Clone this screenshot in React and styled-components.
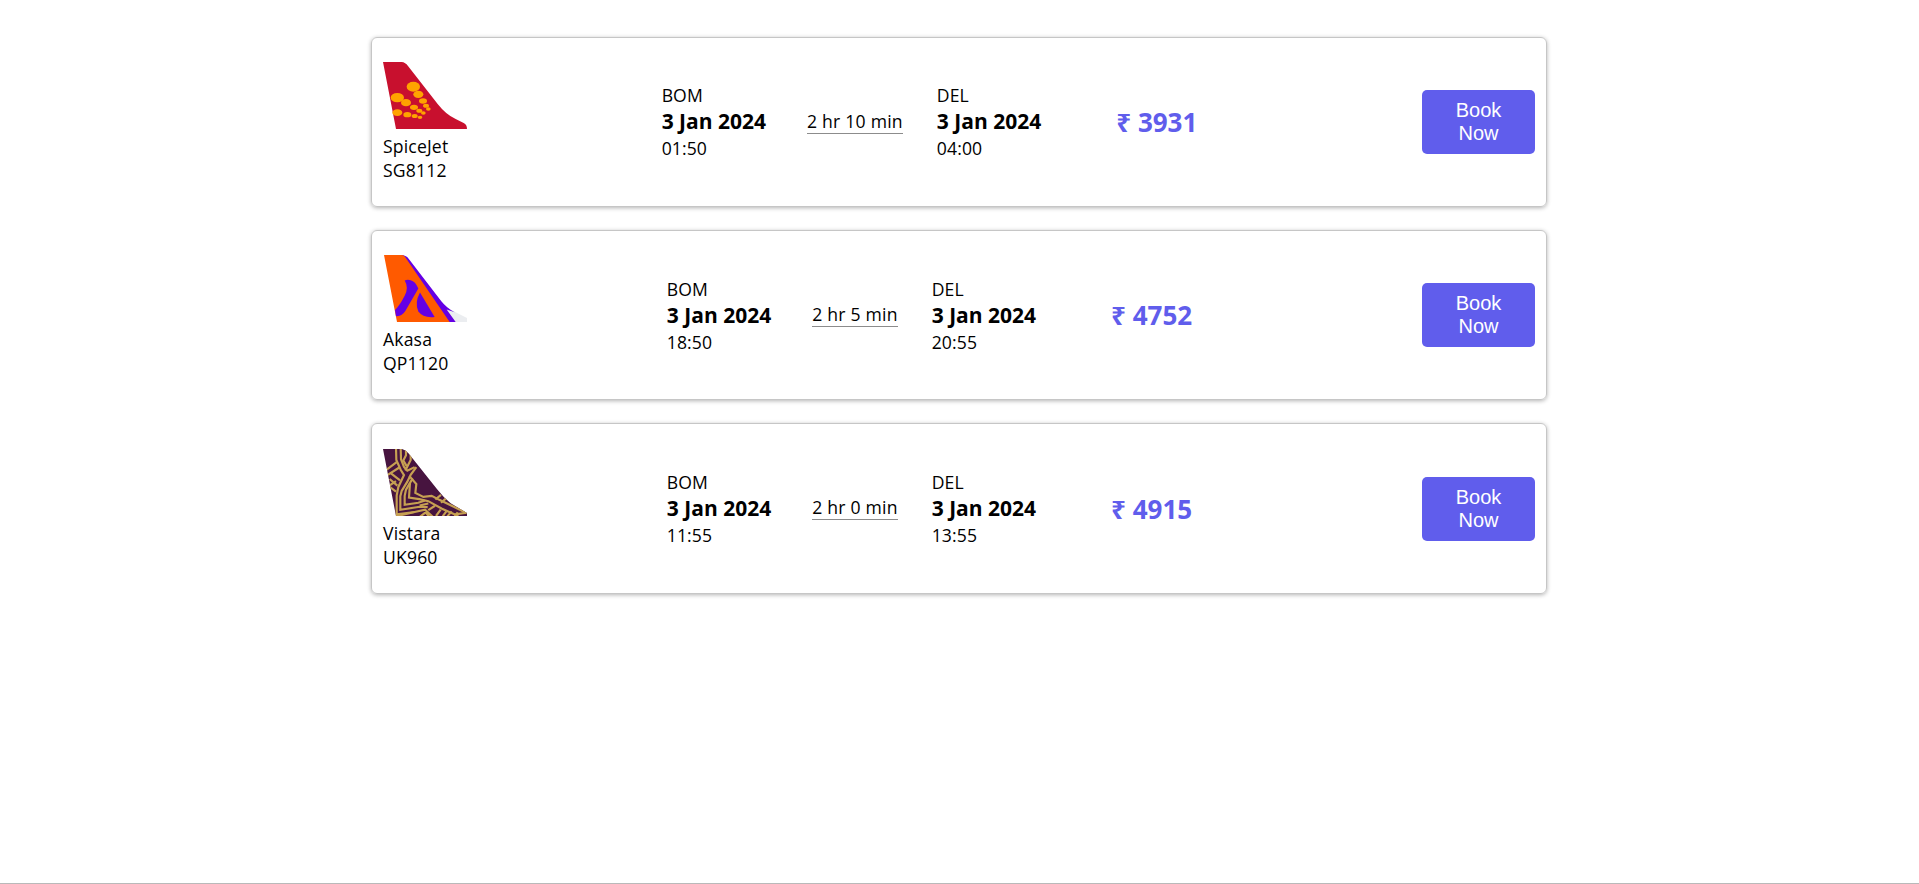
import React from "react";
import styled, { createGlobalStyle } from "styled-components";

const GlobalStyle = createGlobalStyle`
  * { box-sizing: border-box; }
  body {
    margin: 0;
    background: #fff;
    color: #000;
    font-family: "Open Sans", "Noto Sans", sans-serif;
    font-size: 17.6px;
    line-height: 24px;
  }
`;

const Page = styled.main`
  height: 100vh;
  padding: 36.7px 1px 0 0;
  border-bottom: 1px solid #b9b9b9;
  display: flex;
  flex-direction: column;
  align-items: center;
  gap: 22.8px;
`;

const Card = styled.article`
  width: 1176px;
  height: 170.5px;
  padding: 0 11px;
  border: 1px solid #c6c6c6;
  border-radius: 6px;
  box-shadow: 0 1px 4px rgba(0, 0, 0, 0.3);
  display: flex;
  align-items: center;
`;

const Airline = styled.div`
  width: 84px;
  display: flex;
  flex-direction: column;
  letter-spacing: 0.16px;
`;

const Tail = styled.svg`
  display: block;
  width: 84px;
  height: 67px;
  margin-bottom: 5px;
`;

const Journey = styled.div`
  flex: 1;
  margin-right: 30px;
  display: flex;
  justify-content: center;
  align-items: center;
`;

const Stop = styled.div`
  display: flex;
  flex-direction: column;
  letter-spacing: 0.1px;
`;

const StopDate = styled.strong`
  font-size: 21px;
  font-weight: 700;
  line-height: 29px;
  letter-spacing: 0;
`;

const Duration = styled.span`
  margin: 0 34px 1.6px 41px;
  border-bottom: 1px solid #8c8c8c;
  letter-spacing: 0.22px;
`;

const Price = styled.span`
  margin-left: 75px;
  color: #605dec;
  font-size: 26px;
  font-weight: 700;
  line-height: 36px;
`;

const BookButton = styled.button`
  width: 113px;
  height: 64px;
  padding: 0 24px;
  border: 0;
  border-radius: 5px;
  background: #605dec;
  color: #fff;
  font: 20px/23px "Liberation Sans", Arial, sans-serif;
`;

const SpiceJetTail = () => (
  <Tail viewBox="54 96 252 201" preserveAspectRatio="none">
    <path fill="#c8102e" d="M54 96H110Q121 97 129 108L218 222Q243 254 272 267L296 279Q306 284 306 297H93Z" />
    <g fill="#ffa300">
      <ellipse cx="145" cy="170" rx="20" ry="15" />
      <ellipse cx="97" cy="203" rx="20" ry="14" />
      <ellipse cx="160" cy="193" rx="15" ry="11" />
      <ellipse cx="123" cy="218" rx="15" ry="11" />
      <ellipse cx="174" cy="213" rx="12" ry="8" />
      <ellipse cx="147" cy="232" rx="12" ry="8" />
      <ellipse cx="97" cy="248" rx="15" ry="10" />
      <ellipse cx="183" cy="227" rx="9" ry="6" />
      <ellipse cx="163" cy="242" rx="9" ry="6" />
      <ellipse cx="127" cy="254" rx="12" ry="8" />
      <ellipse cx="190" cy="237" rx="7" ry="5" />
      <ellipse cx="175" cy="249" rx="7" ry="5" />
      <ellipse cx="149" cy="258" rx="9" ry="6" />
      <ellipse cx="165" cy="262" rx="7" ry="5" />
    </g>
  </Tail>
);

const AkasaTail = () => (
  <Tail viewBox="54 91 252 200" preserveAspectRatio="none">
    <path fill="#ebedf0" d="M238 245L306 279V291H268Z" />
    <path fill="#6400e4" d="M108 91Q123 91 131 102L229 229Q245 249 269 262L245 254L272 291H245L110 96Z" />
    <path fill="#ff5a00" d="M57 91H110Q117 91 121 98L254 291H96Z" />
    <path fill="#6400e4" d="M119 167Q127 163 137 166Q151 169 160 191L121 258Q111 274 93 274L90 255Q103 244 119 213Q132 188 119 167Z" />
    <path fill="#6400e4" d="M165 203L209 276Q175 280 160 260Q148 234 165 203Z" />
  </Tail>
);

const VistaraTail = () => (
  <Tail viewBox="9 9 252 203" preserveAspectRatio="none">
    <defs>
      <clipPath id="vistara-tail">
        <path d="M9 9H66Q77 11 86 23L172 132Q190 156 212 173L261 203V212H48Z" />
      </clipPath>
    </defs>
    <g clipPath="url(#vistara-tail)" fill="none" stroke="#c6a052" strokeWidth="6.5">
      <path fill="#47143f" stroke="none" d="M9 9H261V212H9Z" />
      <path d="M48 5L49 42L62 72L72 88L55 124L50 150V207L104 200" />
      <path d="M62 5L63 40L72 63L82 75L104 64" />
      <path d="M78 5V28L70 44L80 61" />
      <path d="M92 20V42L76 74" />
      <path d="M18 73L50 49M22 88L58 65M32 82L60 104M22 118L48 138M27 121L48 106M29 100L52 120" />
      <path d="M109 64L92 87L82 108L65 136L61 152V193L119 184L143 185" />
      <path d="M98 98L78 132L74 151V178L115 172L135 165" />
      <path d="M90 112L87 156L118 161L145 167L186 190L235 212" />
      <path d="M88 91L109 115L106 142L130 154L155 151L178 163L258 202" />
      <path d="M48 213L104 200L135 193L159 215M119 215L137 201L148 215" />
      <path d="M145 174L119 180M165 181L145 194M168 212L182 193M188 213L199 198M183 148L166 162M199 158L183 172M202 213L215 198M224 213L233 201M225 207L260 202" />
    </g>
  </Tail>
);

const flights = [
  { airline: "SpiceJet", code: "SG8112", Logo: SpiceJetTail, depart: "01:50", arrive: "04:00", duration: "2 hr 10 min", price: 3931 },
  { airline: "Akasa", code: "QP1120", Logo: AkasaTail, depart: "18:50", arrive: "20:55", duration: "2 hr 5 min", price: 4752 },
  { airline: "Vistara", code: "UK960", Logo: VistaraTail, depart: "11:55", arrive: "13:55", duration: "2 hr 0 min", price: 4915 },
];

function Endpoint({ city, time }) {
  return (
    <Stop>
      <span>{city}</span>
      <StopDate>3 Jan 2024</StopDate>
      <span>{time}</span>
    </Stop>
  );
}

export default function App() {
  return (
    <>
      <GlobalStyle />
      <Page>
        {flights.map(({ airline, code, Logo, depart, arrive, duration, price }) => (
          <Card key={code}>
            <Airline>
              <Logo />
              <span>{airline}</span>
              <span>{code}</span>
            </Airline>
            <Journey>
              <Endpoint city="BOM" time={depart} />
              <Duration>{duration}</Duration>
              <Endpoint city="DEL" time={arrive} />
              <Price>₹ {price}</Price>
            </Journey>
            <BookButton>Book Now</BookButton>
          </Card>
        ))}
      </Page>
    </>
  );
}
